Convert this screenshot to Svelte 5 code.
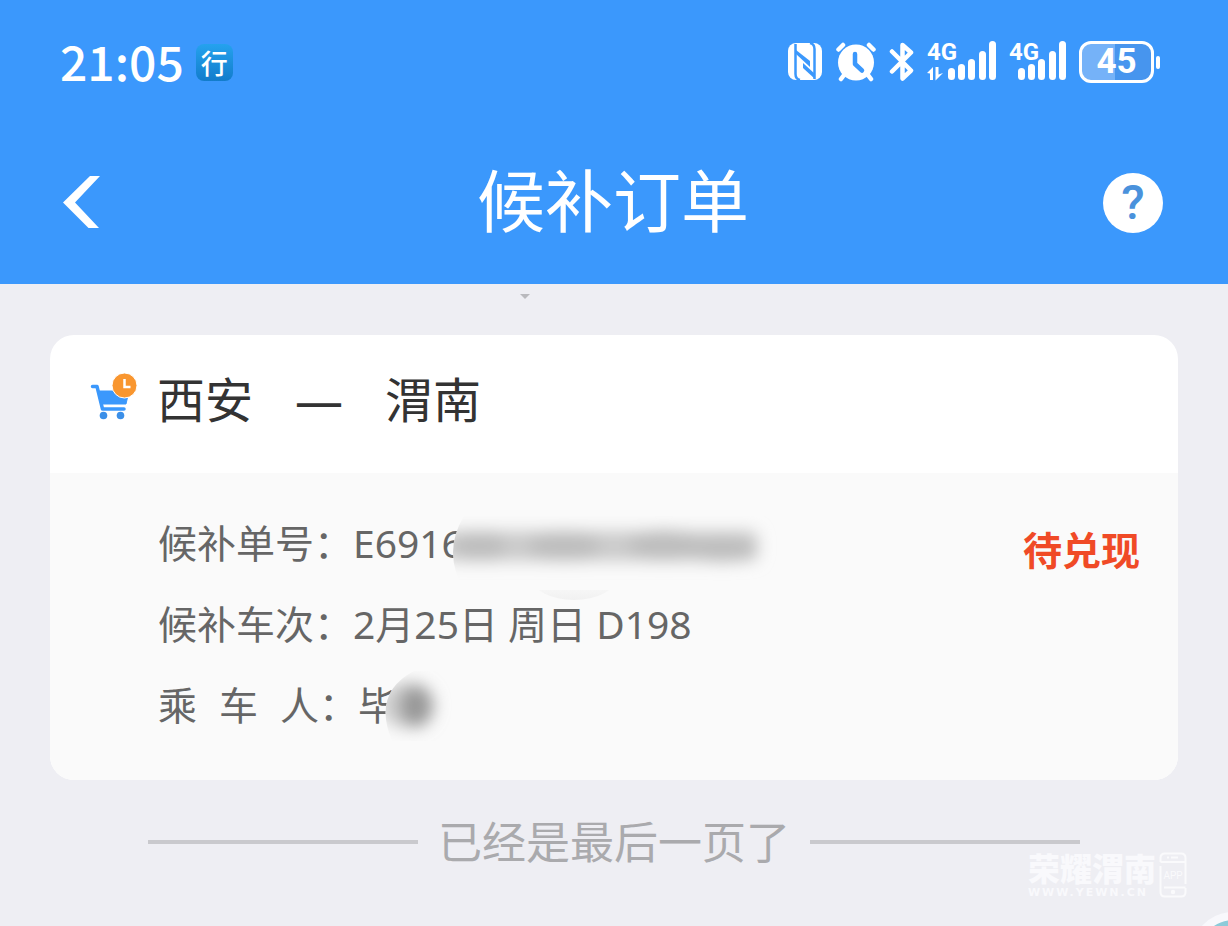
<script>
  const order = {
    from: '西安',
    to: '渭南',
    number: 'E6916',
    train: '2月25日 周日 D198',
    passenger: '毕',
    status: '待兑现'
  };
  const bars = [
    { x: 21, y: 29 },
    { x: 31, y: 25 },
    { x: 41, y: 20 },
    { x: 52, y: 12 },
    { x: 62, y: 2 }
  ];
</script>

<div class="page">
  <header>
    <div class="statusbar">
      <span class="time">21:05</span>
      <span class="badge">行</span>
      <div class="icons">
        <svg class="nfc" width="36" height="40" viewBox="0 0 36 40" aria-hidden="true">
          <rect x="1" y="1" width="34" height="37" rx="8" fill="#fff" />
          <g fill="none" stroke="#3b98fc" stroke-width="2.500">
            <path d="M13 38Q8.500 37 8.500 32V2" />
            <path d="M23 1Q27.500 2 27.500 7V37" />
          </g>
          <path d="M9 8L23 19V25L9 12Z" fill="#3b98fc" />
          <path d="M16 21L28 32V37L16 26Z" fill="#3b98fc" />
        </svg>
        <svg class="alarm" width="42" height="40" viewBox="0 0 42 40" aria-hidden="true">
          <g stroke="#fff" stroke-width="4.500" stroke-linecap="round">
            <path d="M3.500 7.500L8 3M38.500 7.500L34 3M9 33L6 37M33 33L36 37" />
          </g>
          <circle cx="21" cy="20.500" r="18" fill="#fff" />
          <path d="M20 12V22L27 28.500" fill="none" stroke="#3b98fc" stroke-width="4.500" stroke-linecap="round" stroke-linejoin="round" />
        </svg>
        <svg class="bt" width="26" height="42" viewBox="0 0 26 42" aria-hidden="true">
          <path d="M3 10.500L22 29.500L13.500 37.500V4L22 11.500L3 30.500" fill="none" stroke="#fff" stroke-width="4.500" stroke-linecap="round" stroke-linejoin="round" />
        </svg>
        <svg class="sig" width="70" height="42" viewBox="0 0 70 42" aria-label="4G">
          <text x="0" y="19" class="net">4G</text>
          <g fill="#fff">
            <path d="M0 32L6 26V39H3V32.500ZM8.500 26H11.500V33.500L16 32L8.500 39.500Z" />
            {#each bars as b}
              <rect x={b.x} y={b.y - 2} width="7" height={41 - b.y} rx="3.500" />
            {/each}
          </g>
        </svg>
        <svg class="sig" width="58" height="42" viewBox="12 0 58 42" aria-label="4G">
          <text x="12" y="19" class="net">4G</text>
          <g fill="#fff">
            {#each bars as b}
              <rect x={b.x} y={b.y - 2} width="7" height={41 - b.y} rx="3.500" />
            {/each}
          </g>
        </svg>
        <span class="battery"><span>45</span></span>
      </div>
    </div>
    <nav>
      <button class="back" aria-label="返回">
        <svg width="38" height="54" viewBox="0 0 38 54"><path fill="#fff" d="M27 0H37L12 26.500L36 52H25.500L0 26.500Z" /></svg>
      </button>
      <h1>候补订单</h1>
      <button class="help">?</button>
    </nav>
  </header>

  <main>
    <div class="pull"><i></i></div>
    <section class="card">
      <div class="route">
        <svg width="48" height="48" viewBox="0 0 48 48" aria-hidden="true">
          <path d="M2.500 13.500H7L12.500 36H34" fill="none" stroke="#3b98fc" stroke-width="3.500" stroke-linecap="round" stroke-linejoin="round" />
          <path d="M8 18H39L36 31H11Z" fill="#3b98fc" stroke="#3b98fc" stroke-linejoin="round" />
          <circle cx="13.500" cy="42.500" r="3.800" fill="#3b8fe8" />
          <circle cx="30.500" cy="42.500" r="3.800" fill="#3b8fe8" />
          <circle cx="34.500" cy="12.500" r="12.500" fill="#f9962f" stroke="#fff" />
          <path d="M34.500 6V14H40.500" fill="none" stroke="#fff" stroke-width="2.500" />
        </svg>
        <h2><span>{order.from}</span><span>—</span><span>{order.to}</span></h2>
      </div>
      <div class="body">
        <dl>
          <div class="row">
            <dt>候补单号：</dt>
            <dd>
              {order.number}
              <svg class="smudge number" width="330" height="90" viewBox="0 0 330 90" aria-hidden="true">
                <defs>
                  <filter id="soft" x="-50%" y="-100%" width="200%" height="300%"><feGaussianBlur stdDeviation="8" /></filter>
                  <clipPath id="edge"><path d="M12 4H330V78H12Q-10 40 12 4Z" /></clipPath>
                  <linearGradient id="fade" x1="0" y1="0" x2="0" y2="1">
                    <stop offset="0.600" stop-color="#fafafa" /><stop offset="1" stop-color="#f1f1f1" />
                  </linearGradient>
                </defs>
                <ellipse cx="122" cy="66" rx="42" ry="22" fill="url(#fade)" />
                <g clip-path="url(#edge)">
                  <rect width="330" height="78" fill="#fafafa" />
                  <g filter="url(#soft)" fill="#bdbdbd">
                    <rect x="-10" y="19" width="316" height="30" rx="8" fill="#cbcbcb" />
                    <ellipse cx="28" cy="34" rx="26" ry="15" />
                    <ellipse cx="112" cy="34" rx="36" ry="15" />
                    <ellipse cx="212" cy="33" rx="36" ry="15" />
                    <ellipse cx="270" cy="37" rx="34" ry="13" />
                  </g>
                </g>
              </svg>
            </dd>
          </div>
          <div class="row">
            <dt>候补车次：</dt>
            <dd>{order.train}</dd>
          </div>
          <div class="row">
            <dt class="spread"><span>乘</span><span>车</span><span>人：</span></dt>
            <dd>
              {order.passenger}
              <svg class="smudge name" width="80" height="80" viewBox="0 0 80 80" aria-hidden="true">
                <clipPath id="round"><path d="M30 2H80V72H8Q-12 24 30 2Z" /></clipPath>
                <g clip-path="url(#round)">
                  <rect width="80" height="80" fill="#fafafa" />
                  <g filter="url(#soft)">
                    <ellipse cx="22" cy="36" rx="28" ry="23" fill="#cfcfcf" />
                    <ellipse cx="32" cy="37" rx="17" ry="21" fill="#999" />
                  </g>
                </g>
              </svg>
            </dd>
          </div>
        </dl>
        <strong>{order.status}</strong>
      </div>
    </section>
    <p class="end">已经是最后一页了</p>
  </main>

  <div class="mark">
    <div>
      <b>荣耀渭南</b>
      <small>WWW.YEWN.CN</small>
    </div>
    <svg width="28" height="46" viewBox="0 0 28 46" aria-hidden="true">
      <path d="M1.500 10V6Q1.500 1.500 6 1.500H22Q26.500 1.500 26.500 6V32M1.500 14V40Q1.500 44.500 6 44.500H22Q26.500 44.500 26.500 40V36M1.500 10H26.500M5 35.500H26.500M8 5.500H10M12 5.500H19" fill="none" stroke="#fafafc" stroke-width="2" />
      <circle cx="14" cy="40" r="2.200" fill="#fafafc" />
      <text x="14" y="27" text-anchor="middle">APP</text>
    </svg>
  </div>
  <div class="float"></div>
</div>

<style>
  :global(body) { margin: 0; }
  .page {
    position: relative;
    overflow: hidden;
    min-height: 100vh;
    background: #eeeef3;
    font-family: "Noto Sans", "Noto Sans CJK SC", sans-serif;
    color: #333;
  }
  header { background: #3b98fc; color: #fff; }
  .statusbar {
    display: flex;
    align-items: center;
    height: 124px;
    padding: 0 66px 0 60px;
    box-sizing: border-box;
  }
  .time { padding-bottom: 4px; font: 500 48px/60px "Noto Sans CJK SC", sans-serif; }
  .badge {
    width: 37px;
    margin-left: 12px;
    border-radius: 8px;
    background: linear-gradient(#25a2ee, #127ccb);
    font: 500 27px/37px "Noto Sans CJK SC", sans-serif;
    text-align: center;
  }
  .icons { display: flex; align-items: center; gap: 12px; margin-left: auto; }
  .sig { overflow: visible; }
  .net { font: 700 24px Roboto, sans-serif; fill: #fff; }
  .battery {
    position: relative;
    box-sizing: border-box;
    width: 75px;
    height: 42px;
    margin-right: 8px;
    border: 3px solid #fff;
    border-radius: 12px;
    background: linear-gradient(90deg, #75b2f8 48%, #4795ee 48%);
    font: 700 35px/36px Roboto, sans-serif;
    text-align: center;
  }
  .battery::after {
    content: "";
    position: absolute;
    right: -9px;
    top: 12px;
    width: 4px;
    height: 13px;
    border-radius: 2px;
    background: #fff;
  }
  nav {
    display: flex;
    align-items: center;
    justify-content: space-between;
    height: 160px;
    padding: 0 65px 2px 63px;
    box-sizing: border-box;
  }
  button { border: 0; padding: 0; font: inherit; cursor: pointer; }
  .back { display: flex; width: 60px; background: none; }
  h1 { margin: 0; padding-bottom: 4px; font-size: 68px; line-height: 80px; font-weight: 400; }
  .help {
    width: 60px;
    height: 60px;
    border-radius: 50%;
    background: #fff;
    color: #4a92dc;
    font: 500 48px/60px Roboto, sans-serif;
  }
  main { padding: 0 50px; }
  .pull { height: 51px; padding: 10px 0 0 42%; margin-left: -4px; box-sizing: border-box; }
  .pull i {
    display: block;
    width: 0;
    border: 5px solid transparent;
    border-top-color: #b9b9bd;
    border-bottom: 0;
  }
  .card { border-radius: 24px; overflow: hidden; background: #fff; }
  .route {
    display: flex;
    align-items: center;
    gap: 19px;
    height: 138px;
    padding: 0 40px 14px;
    box-sizing: border-box;
  }
  h2 {
    display: flex;
    gap: 42px;
    margin: 0;
    font-size: 48px;
    line-height: 56px;
    padding-top: 6px;
    font-weight: 400;
  }
  .body {
    display: flex;
    justify-content: space-between;
    padding: 29px 38px 35px 108px;
    background: #fafafa;
    font-size: 39px;
    line-height: 81px;
    color: #666;
  }
  dl { margin: 0; }
  .row { display: flex; }
  dd { position: relative; margin: 0; white-space: nowrap; }
  .spread { display: flex; gap: 22px; }
  .smudge { position: absolute; }
  .number { left: 99px; top: 10px; }
  .name { left: 26px; top: 5px; }
  strong { padding-top: 7px; color: #f04a26; font-weight: 700; }
  .end {
    display: flex;
    align-items: center;
    gap: 20px;
    margin: 32px 98px 0;
    font-size: 44px;
    line-height: 60px;
    color: #aaaaad;
  }
  .end::before, .end::after { content: ""; flex: 1; height: 4px; background: #c9c9cd; }
  .mark {
    position: absolute;
    right: 41px;
    bottom: 27px;
    display: flex;
    gap: 3px;
    color: #f9f9fc;
  }
  .mark b { display: block; font-size: 32px; line-height: 34px; font-weight: 900; }
  .mark small {
    display: block;
    margin-top: 1px;
    font: 700 11px/12px "DejaVu Sans", sans-serif;
    letter-spacing: 2px;
  }
  .mark text { font: 10px Roboto, sans-serif; fill: #fafafc; }
  .float {
    position: absolute;
    right: -50px;
    bottom: -74px;
    width: 72px;
    height: 72px;
    border: 8px solid #f8f8fc;
    border-radius: 50%;
    background: #8ccbd9;
  }
</style>
